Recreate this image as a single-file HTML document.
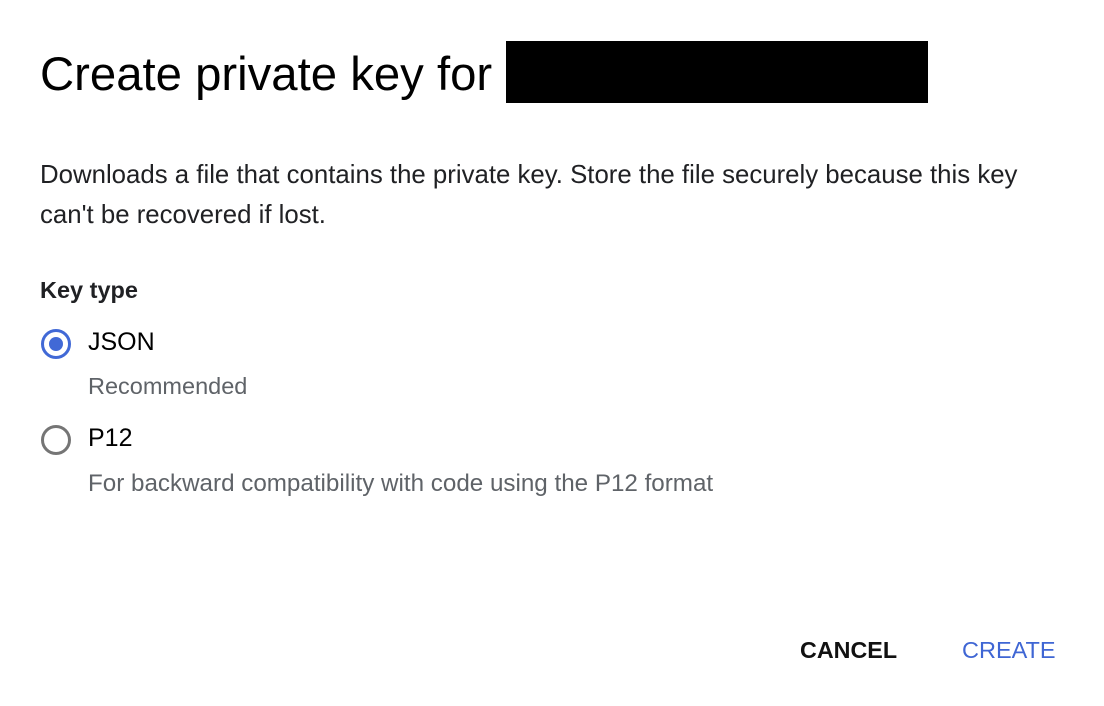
<!DOCTYPE html>
<html><head><style>
body{margin:0;width:1104px;height:706px;background:#fff;font-family:"Liberation Sans",Arial,sans-serif;position:relative;overflow:hidden;color:#000}
.a{position:absolute;white-space:nowrap}
.r{position:absolute;width:24px;height:24px;border-radius:50%;box-sizing:border-box}
</style></head><body>
<div class="a" style="left:40px;top:47px;font-size:47.3px;line-height:56px">Create private key for</div>
<div class="a" style="left:506px;top:41px;width:422px;height:62px;background:#000"></div>
<div class="a" style="left:40px;top:155px;font-size:25.8px;line-height:40px;color:#202124">Downloads a file that contains the private key. Store the file securely because this key<br>can't be recovered if lost.</div>
<div class="a" style="left:40px;top:277px;font-size:23.5px;font-weight:bold;color:#202124">Key type</div>
<div class="r" style="left:41px;top:329px;width:30px;height:30px;border:3px solid #4169d6"></div>
<div class="r" style="left:49px;top:337px;width:14px;height:14px;background:#4169d6"></div>
<div class="a" style="left:88px;top:328px;font-size:25px">JSON</div>
<div class="a" style="left:88px;top:373px;font-size:23.5px;color:#5f6368">Recommended</div>
<div class="r" style="left:41px;top:425px;width:30px;height:30px;border:3px solid #757575"></div>
<div class="a" style="left:88px;top:424px;font-size:25px">P12</div>
<div class="a" style="left:88px;top:470px;font-size:24.2px;color:#5f6368">For backward compatibility with code using the P12 format</div>
<div class="a" style="left:800px;top:637px;font-size:23.3px;font-weight:bold;color:#111">CANCEL</div>
<div class="a" style="left:962px;top:637px;font-size:23.5px;color:#3f66d4">CREATE</div>
</body></html>
